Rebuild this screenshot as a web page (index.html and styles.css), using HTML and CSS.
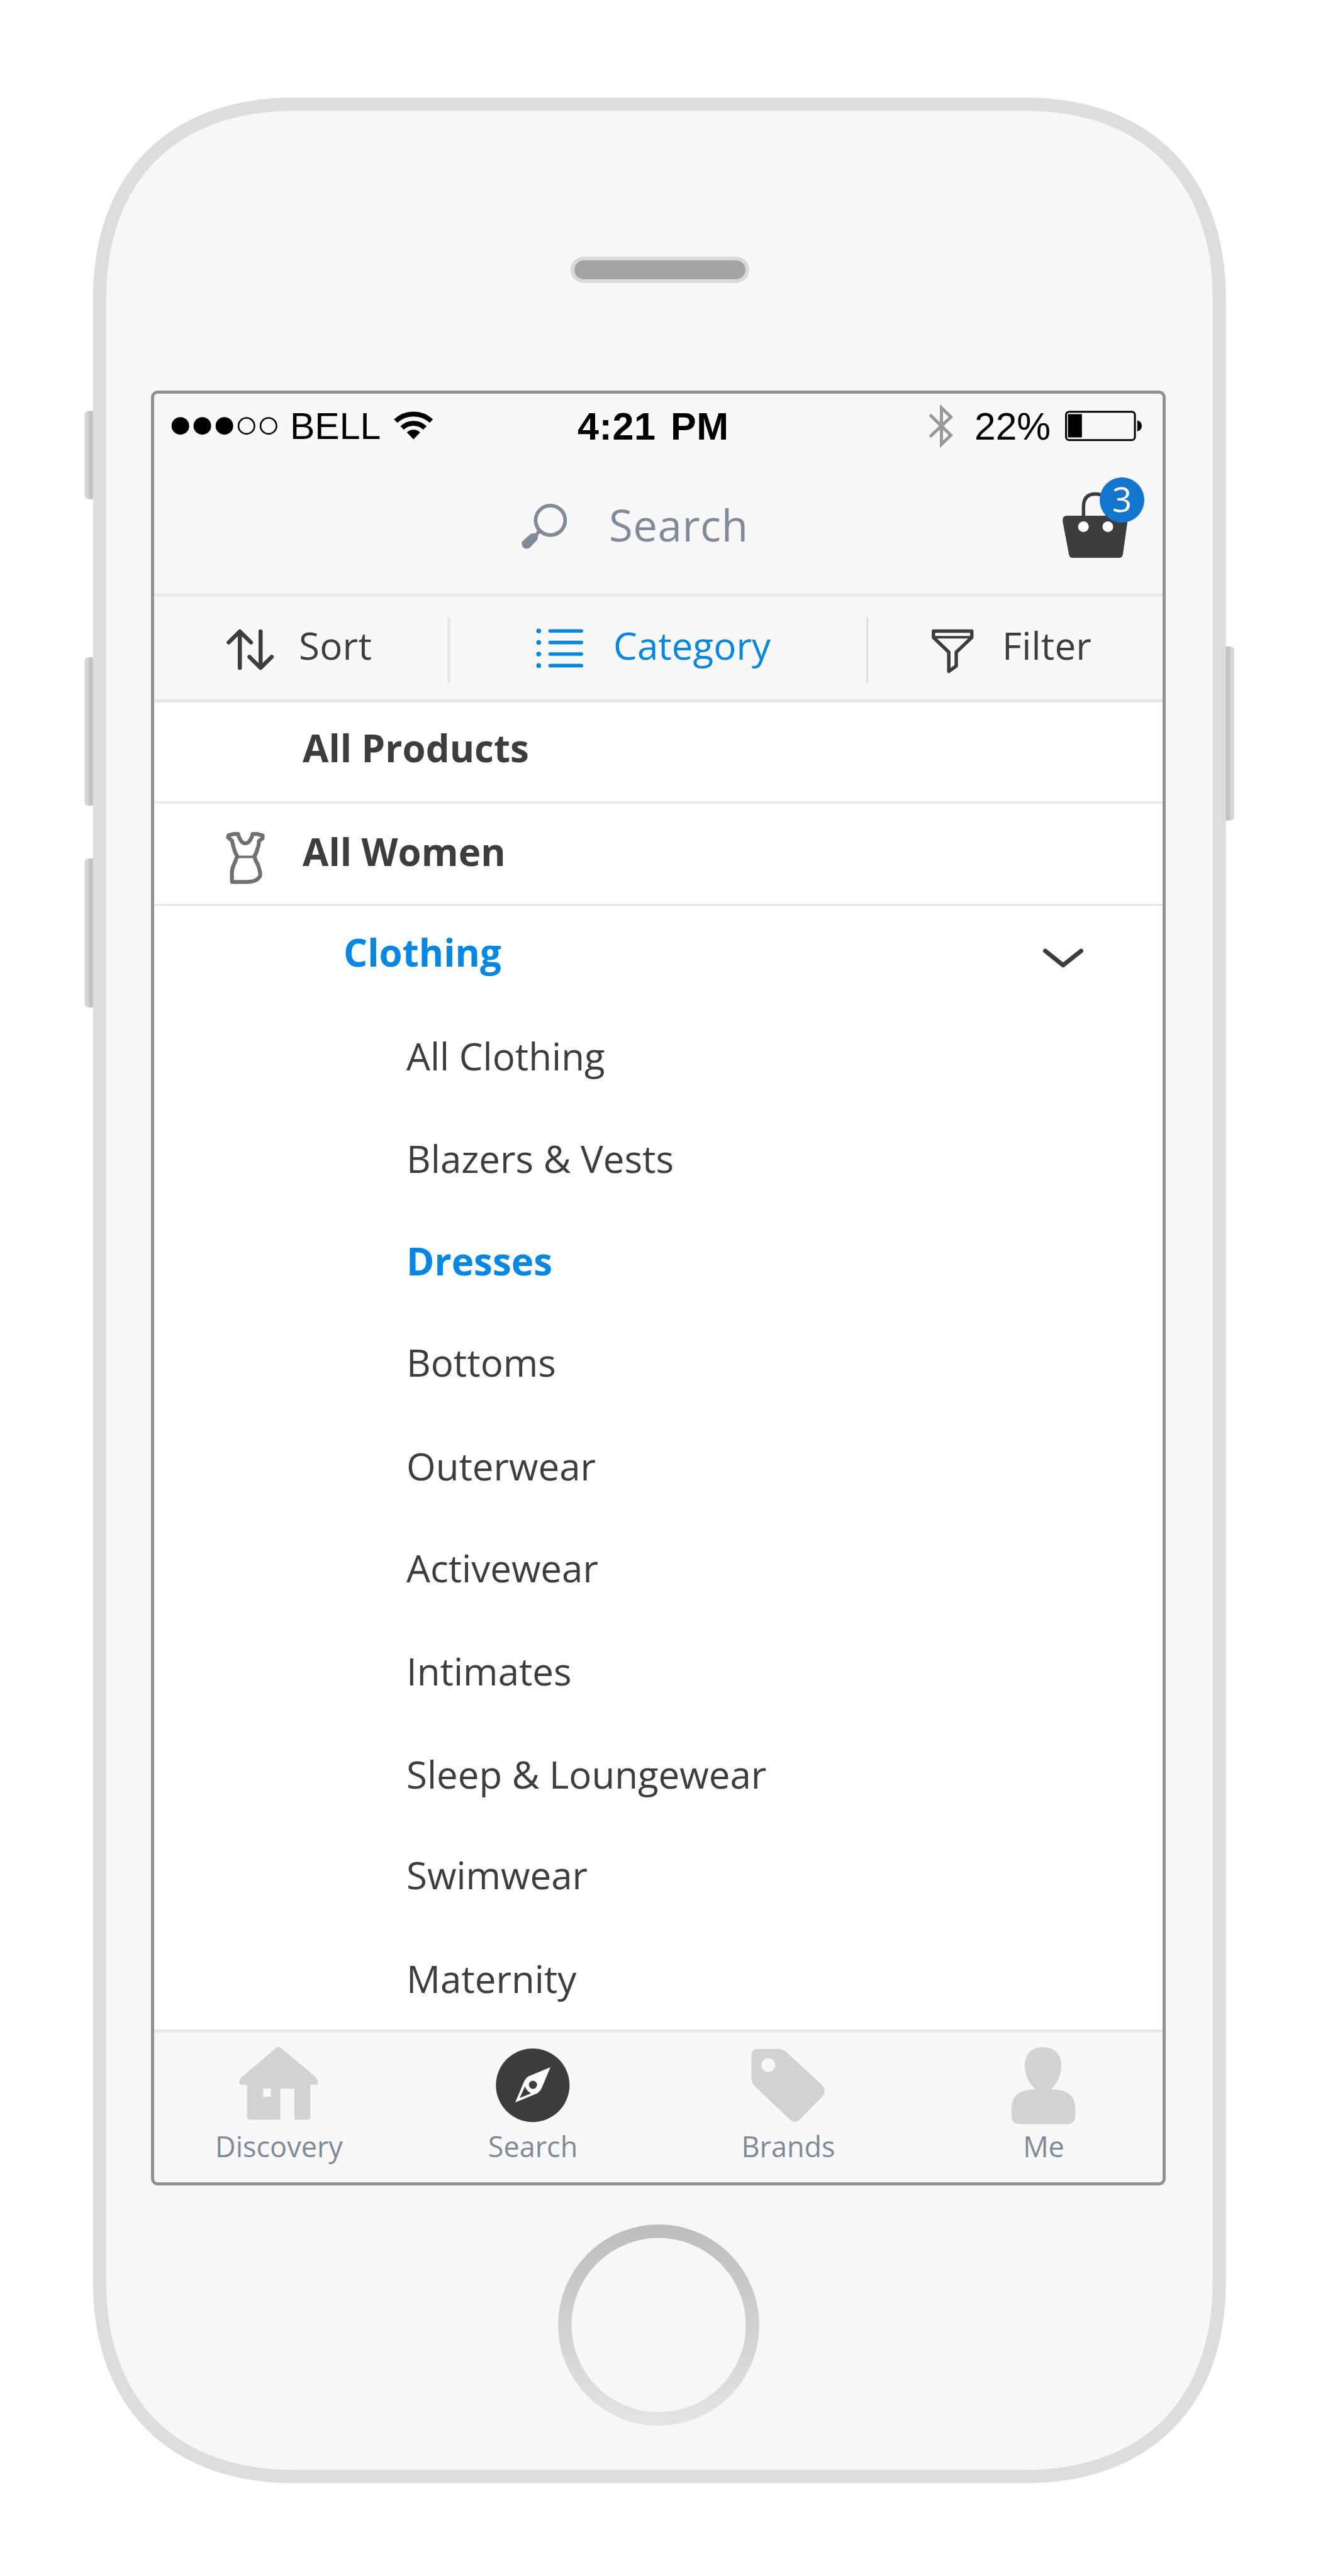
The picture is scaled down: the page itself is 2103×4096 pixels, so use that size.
FILE: index.html
```html
<!DOCTYPE html>
<html lang="en">
<head>
<meta charset="utf-8">
<title>Shop categories</title>
<link rel="stylesheet" href="styles.css">
</head>
<body>
<div class="device">
  <svg class="shell" viewBox="0 0 2103 4096" aria-hidden="true">
    <g fill="#d6d6d6">
      <rect x="134.5" y="653.5" width="24" height="140" rx="6"/>
      <rect x="134.5" y="1045" width="24" height="236" rx="6"/>
      <rect x="134.5" y="1365" width="24" height="237" rx="6"/>
      <rect x="1938" y="1028" width="24" height="276.500" rx="6"/>
    </g>
    <g fill="#c4c4c4">
      <rect x="141" y="653.5" width="12" height="140"/>
      <rect x="141" y="1045" width="12" height="236"/>
      <rect x="141" y="1365" width="12" height="237"/>
      <rect x="1943" y="1028" width="12.500" height="276.500"/>
    </g>
    <path fill="#f7f7f7" stroke="#dddddd" stroke-width="21" d="M466.900 165.700H1629.600C1821.800 165.700 1938.100 282 1938.100 474.200V3629.300C1938.100 3821.500 1821.800 3937.800 1629.600 3937.800H466.900C274.700 3937.800 158.400 3821.500 158.400 3629.300V474.200C158.400 282 274.700 165.700 466.900 165.700Z"/>
  </svg>

  <div class="speaker"></div>

  <main class="screen">
    <header class="header">
      <div class="status">
        <div class="status-left">
          <svg width="170" height="54" viewBox="272 651 170 54">
            <circle cx="286.700" cy="677.2" r="14"/><circle cx="321.600" cy="677.2" r="14"/><circle cx="356.700" cy="677.2" r="14"/>
            <g fill="none" stroke="#000" stroke-width="2.600"><circle cx="391.800" cy="677.2" r="12.700"/><circle cx="426.800" cy="677.2" r="12.700"/></g>
          </svg>
          <span class="carrier">BELL</span>
          <svg width="64" height="54" viewBox="625 651 64 54">
            <g fill="none" stroke="#000" stroke-width="7.800">
              <path d="M629 669.5A41.500 41.500 0 0 1 685.600 669.5"/>
              <path d="M639.200 680.500A26 26 0 0 1 675.400 680.500"/>
            </g>
            <path d="M657.300 698.5L646.700 687.500A15.300 15.300 0 0 1 667.900 687.500Z"/>
          </svg>
        </div>
        <span class="time">4:21 PM</span>
        <div class="status-right">
          <svg class="bluetooth" width="44" height="70" viewBox="1474 643 44 70">
            <path fill="none" stroke="#999" stroke-width="5" d="M1478.200 659.500L1511.500 692L1496.500 706.500V648.500L1511.500 663L1478.200 694.500"/>
          </svg>
          <span class="percent">22%</span>
          <svg width="124" height="54" viewBox="1692 651 124 54">
            <rect x="1694.500" y="654.700" width="109.500" height="45" rx="5" fill="none" stroke="#000" stroke-width="3"/>
            <rect x="1697.500" y="658.500" width="22.300" height="37"/>
            <path d="M1807.800 668.300Q1815 670.500 1815 677.200T1807.800 686Z"/>
          </svg>
        </div>
      </div>
      <div class="search">
        <svg width="78" height="80" viewBox="826 794 78 80">
          <circle cx="874.900" cy="827.300" r="23.500" fill="none" stroke="#808b99" stroke-width="5.800"/>
          <path fill="#808b99" d="M854 843L860 847L855.800 850L854 858.500L841.500 871.500Q829 875.500 829.300 861.800L843.500 848.800L852 847.500Z"/>
        </svg>
        <span class="search-text">Search</span>
        <div class="bag">
          <svg width="110" height="112" viewBox="1686 778 110 112">
            <path fill="none" stroke="#3d3d3d" stroke-width="5.400" d="M1722.300 822V806Q1722.300 785.500 1741.200 785.500T1760.200 806V822"/>
            <path fill="#3d3d3d" d="M1695 820H1787Q1793 820.500 1792.300 829L1785 881Q1784 887 1779 887H1705Q1700 887 1699 881L1689.200 829Q1688.500 820.500 1695 820Z"/>
            <circle cx="1722.200" cy="837.500" r="8.500" fill="#fff"/><circle cx="1761" cy="837.500" r="8.500" fill="#fff"/>
          </svg>
          <span class="badge">3</span>
        </div>
      </div>
    </header>

    <nav class="tools">
      <div class="tool sort">
        <svg width="80" height="90" viewBox="358 981 80 90">
          <g fill="none" stroke="#3d3d3d" stroke-width="6.500" stroke-linecap="round" stroke-linejoin="round">
            <path d="M363.500 1021.500L381.200 1004L399 1021.500M381.200 1005V1062"/>
            <path d="M396.500 1044.500L414.200 1062L431.900 1044.500M414.200 1061V1004"/>
          </g>
        </svg>
        <span>Sort</span>
      </div>
      <i class="divider"></i>
      <div class="tool category">
        <svg width="80" height="90" viewBox="850 981 80 90">
          <g stroke="#0488e8" stroke-width="5.600" stroke-linecap="round">
            <path d="M874.500 1003.300H924.200M874.500 1021.600H924.200M874.500 1040H924.200M874.500 1058.400H924.200"/>
          </g>
          <g fill="#0488e8"><circle cx="856.300" cy="1003.300" r="3.800"/><circle cx="856.300" cy="1021.600" r="3.800"/><circle cx="856.300" cy="1040" r="3.800"/><circle cx="856.300" cy="1058.400" r="3.800"/></g>
        </svg>
        <span>Category</span>
      </div>
      <i class="divider thin"></i>
      <div class="tool filter">
        <svg width="72" height="90" viewBox="1478 981 72 90">
          <g fill="none" stroke="#3d3d3d" stroke-width="5.500" stroke-linejoin="round">
            <path d="M1483.800 1003.500H1544.700V1013.500L1520 1037V1059L1508.200 1067.500V1037L1483.800 1013.500Z"/>
            <path stroke-width="4" d="M1484 1013.200H1544.500"/>
          </g>
        </svg>
        <span>Filter</span>
      </div>
    </nav>

    <section class="categories">
      <div class="row products">All Products</div>
      <div class="row women">
        <svg width="72" height="90" viewBox="0 0 72 90">
          <g fill="none" stroke="#6d7075" stroke-width="6.200" stroke-linejoin="round">
            <path d="M7.400 11.300L8.200 8.200L17 6.100H23.500Q24 10 25.800 12.800Q29 20.500 34.800 21.200Q41 20.500 44.200 12.800Q46 10 46.500 6.100H53.400L62.600 8.600L62.300 13L56.500 17.400Q56.500 25 54.200 29.700Q52.500 37 49.200 41.300Q51 49 55.300 55.700Q57 61 58.300 66.500Q59.500 73 56.500 75.500Q52 82 38 82.400H13.900L13.500 68Q14 60 17 54.200Q20.500 47 22 41.300Q18 35 16.600 28.100Q15 22 13.900 16.800Z"/>
            <path stroke-width="4" d="M22 42.500H49.200"/>
          </g>
        </svg>
        <span>All Women</span>
      </div>
      <div class="row clothing">
        <span>Clothing</span>
        <svg width="72" height="40" viewBox="1654 1504 72 40">
          <path fill="none" stroke="#3d3d3d" stroke-width="7" stroke-linecap="round" stroke-linejoin="round" d="M1661.500 1512L1689.900 1534.700L1718.500 1512"/>
        </svg>
      </div>
      <ul class="items">
        <li>All Clothing</li>
        <li>Blazers &amp; Vests</li>
        <li class="selected">Dresses</li>
        <li>Bottoms</li>
        <li>Outerwear</li>
        <li>Activewear</li>
        <li>Intimates</li>
        <li>Sleep &amp; Loungewear</li>
        <li>Swimwear</li>
        <li>Maternity</li>
      </ul>
    </section>

    <nav class="tabs">
      <div class="tab">
        <svg width="132" height="132" viewBox="379 3250 132 132">
          <path fill="#d2d2d2" fill-rule="evenodd" d="M439.500 3256Q443 3253.500 446.500 3256L501 3302Q506.500 3308 505 3314.800H493.300V3366Q493 3370.500 488.500 3370.500H467.900V3321H445.500V3370.500H397Q392.900 3370 392.700 3366V3314.800H381.500Q378.500 3308 385 3302ZM418.100 3321V3334H430.600V3321Z"/>
        </svg>
        <span>Discovery</span>
      </div>
      <div class="tab">
        <svg width="132" height="132" viewBox="782 3250 132 132">
          <circle cx="846.800" cy="3315.700" r="58.500" fill="#3d3d3d"/>
          <path fill="#fff" d="M875 3287L861.500 3319Q859.500 3324.500 854 3328.500L819 3343L832.500 3311Q834.500 3305.500 840 3301.500Z"/>
          <circle cx="847.200" cy="3315" r="6.500" fill="#3d3d3d"/>
          <path fill="#3d3d3d" d="M834.500 3317.500Q837 3325 844.500 3328.500L826 3336Z"/>
        </svg>
        <span>Search</span>
      </div>
      <div class="tab">
        <svg width="132" height="132" viewBox="1188.500 3250 132 132">
          <path fill="#d2d2d2" fill-rule="evenodd" d="M1204 3258H1238Q1245 3258 1250 3262.500L1307 3315Q1315.500 3325 1307 3334.500L1271 3371Q1264 3377 1257 3371L1201 3318Q1194.800 3312 1194.800 3304V3268Q1195 3258.500 1204 3258ZM1221.800 3272.700A11 11 0 1 0 1221.810 3272.700Z"/>
        </svg>
        <span>Brands</span>
      </div>
      <div class="tab">
        <svg width="132" height="132" viewBox="1594.500 3250 132 132">
          <path fill="#d2d2d2" d="M1658.600 3254.900C1677 3254.900 1687.500 3267 1687.500 3284C1687.500 3300 1681 3313 1671 3322C1697 3322.500 1709.800 3332 1709.800 3353V3364Q1709.500 3377.300 1697 3377.500H1621Q1608.500 3377.300 1608.300 3364V3353C1608.300 3332 1621 3322.500 1646.400 3322C1636 3313 1629.500 3300 1629.500 3284C1629.500 3267 1640 3254.900 1658.600 3254.900Z"/>
        </svg>
        <span>Me</span>
      </div>
    </nav>
  </main>

  <svg class="home" width="320" height="320" viewBox="0 0 320 320">
    <defs><linearGradient id="ring" x1="0" y1="0" x2="0" y2="1"><stop offset="0" stop-color="#bebebe"/><stop offset="1" stop-color="#e3e3e3"/></linearGradient></defs>
    <circle cx="160" cy="160" r="149.200" fill="none" stroke="url(#ring)" stroke-width="21.400"/>
  </svg>
</div>
</body>
</html>
```
FILE: styles.css
```css
* { box-sizing: border-box; }

body {
  margin: 0;
  background: #fff;
  color: #3d3d3d;
  font-family: "Open Sans", "Noto Sans", sans-serif;
  font-size: 60px;
}

svg { display: block; flex: none; }

.device {
  position: relative;
  display: flex;
  flex-direction: column;
  align-items: center;
  width: 2103px;
  height: 4096px;
  padding: 408px 154px 0 148px;
  overflow: hidden;
}

.shell {
  position: absolute;
  inset: 0;
  width: 2103px;
  height: 4096px;
}

.speaker, .screen, .home { position: relative; flex: none; }

.speaker {
  width: 284px;
  height: 42px;
  border: 6px solid #d9d9d9;
  border-radius: 21px;
  background: #a4a4a4;
}

.screen {
  display: flex;
  flex-direction: column;
  width: 1613px;
  height: 2854px;
  margin: 171px 4px 0 0;
  border: 5px solid #959190;
  border-radius: 11px;
  background: #fff;
  overflow: hidden;
}

.header {
  height: 323px;
  border-bottom: 5px solid #e9eaeb;
  background: #f8f8f8;
}

.status {
  display: grid;
  grid-template-columns: 673px auto 1fr;
  align-items: center;
  height: 104px;
  color: #000;
  font-family: "Liberation Sans", Arial, sans-serif;
  line-height: 104px;
}

.status-left, .status-right { display: flex; align-items: center; }
.status-left { padding-left: 27px; }
.status-right { justify-content: flex-end; padding-right: 32px; }

.carrier { width: 164px; margin-left: 19px; font-size: 59px; }
.time { font-size: 61px; font-weight: 700; letter-spacing: 0.6px; word-spacing: 6px; white-space: nowrap; }
.bluetooth { margin-right: 31px; }
.percent { width: 143px; font-size: 60.5px; }

.search {
  display: flex;
  align-items: center;
  height: 214px;
  padding: 0 52px 6px 581px;
}

.search-text {
  margin-left: 64px;
  color: #808b99;
  font-size: 69px;
  letter-spacing: 0.5px;
}

.bag { position: relative; margin-left: auto; }

.badge {
  position: absolute;
  left: 62px;
  top: -19px;
  width: 71px;
  height: 72px;
  border-radius: 50%;
  background: #1376cf;
  color: #fff;
  font-size: 55px;
  line-height: 68px;
  text-align: center;
}

.tools {
  display: flex;
  height: 168px;
  border-bottom: 5px solid #e5e5e5;
  background: #f8f8f8;
}

.tool { display: flex; align-items: center; padding-bottom: 9px; }
.sort { width: 466px; padding-left: 113px; gap: 37px; letter-spacing: 0.3px; }
.category { width: 661px; padding-left: 134px; gap: 45px; color: #0488e8; letter-spacing: 0.1px; }
.filter { padding-left: 98px; gap: 43px; letter-spacing: 0.2px; }

.divider { width: 5px; height: 105px; margin-top: 32px; background: #e8e8e8; }
.divider.thin { width: 3px; background: #e0e0e0; }

.row { display: flex; font-weight: 700; }
.products { height: 160px; padding-left: 236px; border-bottom: 2px solid #e0e0e0; line-height: 144px; }
.women { height: 163px; padding-left: 110px; border-bottom: 2px solid #e0e0e0; line-height: 155px; }
.women svg { margin: 43px 54px 0 0; }
.clothing { height: 157px; justify-content: space-between; padding: 0 122px 0 301px; color: #0488e8; line-height: 148px; }
.clothing svg { margin-top: 64px; }

.items {
  display: grid;
  grid-template-rows: 163px 163px 161px 165px 162px 164px 164px 160px 165px 163px;
  margin: 0;
  padding: 0 0 0 401px;
  list-style: none;
  line-height: 165px;
}

.selected { color: #0488e8; font-weight: 700; }

.tabs {
  display: grid;
  grid-template-columns: 405px 402px 410px 402px;
  height: 243px;
  margin-top: auto;
  margin-left: -3px;
  padding-top: 18px;
  border-top: 5px solid #e7e7e7;
  background: #f8f8f8;
}

.tab {
  display: flex;
  flex-direction: column;
  align-items: center;
  color: #7f8a98;
  font-size: 45px;
  line-height: 61px;
}

.tab span { margin-right: 2px; }

.home { margin: 62px 3px 0 0; }
```
